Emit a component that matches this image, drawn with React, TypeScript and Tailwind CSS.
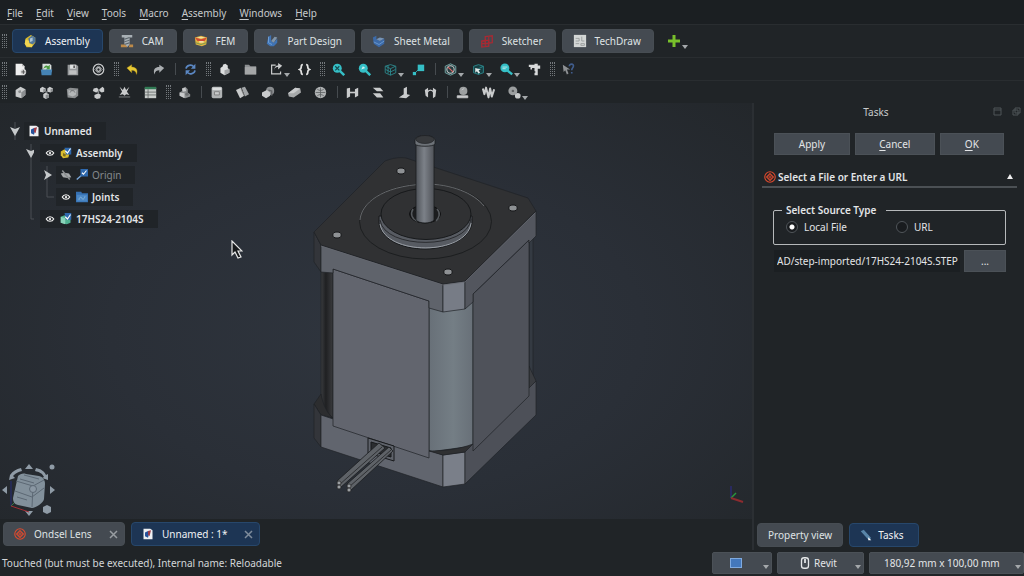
import { useState, type ReactNode } from "react";
import clsx from "clsx";

const G = "#c9cbcc";
const D = "#8b8e90";
const T = "#35bfc6";

// all toolbar glyphs share a 16x16 box
const glyphs: Record<string, ReactNode> = {
  assembly: (
    <>
      <path d="M3 5l6-4 5 3v6l-4 5-6 0-2-4z" fill="#d9b92c" />
      <path d="M6 5l4-3 4 2v5l-3 3-4-2z" fill="#50779d" />
      <path d="M3 6l4 2v3l4 1-1 3-6-1-2-3z" fill="#efd452" />
      <path d="M8 5l3-1v4l-3 1z" fill="#aec5d5" />
    </>
  ),
  cam: (
    <>
      <path d="M2 1h12v3H11v8l-3 3-3-3V4H2z" fill="#a8b0b5" />
      <path d="M5 6l6-2M5 9l6-2M5 12l6-2" stroke="#596269" strokeWidth="1.2" />
      <path d="M1 12h4l3 2v1H1zM11 12h4v3h-5z" fill="#bd8a49" />
    </>
  ),
  fem: (
    <>
      <path d="M1 4l7-2 7 2-1 8-5 2-7-2z" fill="#e0b240" />
      <path d="M1 4l7 2 7-2-3 4H4z" fill="#d14834" />
      <path d="M3 4l5-1 5 1-5 1zM6 8h5v2H6z" fill="#f1e1a5" />
      <path d="M2 10l6 2 6-2" stroke="#6c9952" fill="none" />
    </>
  ),
  part: (
    <>
      <path d="M4 3l3-2v7l3 2 4-5v5l-4 4H6l-4-3z" fill="#3f73b4" />
      <path d="M7 8l4-5 3 1-4 6z" fill="#8195a9" />
      <path d="M4 3v7l4 2" stroke="#74a2d6" fill="none" />
    </>
  ),
  sheet: (
    <>
      <path d="M1 4l4-2v4l4 2 5-3v6l-6 4-6-4z" fill="#3c6aa8" />
      <path d="M5 6l4-2 5 1-5 3z" fill="#7895b8" />
      <path d="M2 9l6 3 6-4" stroke="#6d9bd1" fill="none" />
    </>
  ),
  sketcher: (
    <g fill="none" stroke="#a82a33" strokeWidth="1.5">
      <path d="M2 8l8-1v7l-8 1zM6 3l8-1v8l-8 1z" />
      <path d="M2 11h8M6 7v7M10 3v7" strokeWidth="1.2" />
    </g>
  ),
  techdraw: (
    <>
      <path d="M1 1h14v14H1z" fill="#d3d6d5" />
      <path d="M3 5h4v3H3M10 3v5h3M3 11h4M9 11h4v2H9z" stroke="#979c9c" fill="none" />
    </>
  ),
  new: (
    <>
      <path d="M2 1h8l3 3v11H2z" fill="#eee" />
      <path d="M10 1v3h3" fill="#aaa" />
      <circle cx="11.500" cy="11" r="3.500" fill="#d6d6d6" />
      <path d="M11.500 8.500v5M9 11h5" stroke="#444" />
    </>
  ),
  open: (
    <>
      <path d="M3 1h9l2 2v8H3z" fill="#d8dedc" />
      <path d="M4 8c1-5 4-6 6-4l2-2v6H7l2-2c-2-1-4 0-5 2z" fill="#4a9b3e" />
      <path d="M1 8h14l-1 7H2z" fill="#4583b4" />
    </>
  ),
  save: (
    <>
      <path d="M2 2h11l2 2v11H2z" fill="#96999b" />
      <path d="M5 2h7v5H5z" fill="#dfe1e2" />
      <path d="M9 3h2v3H9z" fill="#555" />
      <path d="M4 9h9v5H4z" fill="#bfc1c2" />
    </>
  ),
  lens: (
    <g fill="none" stroke="#c9cbcc">
      <circle cx="8" cy="8" r="6.500" strokeWidth="1.500" />
      <path d="M8 3.500l4.500 4.500-4.500 4.500L3.500 8z" />
      <circle cx="8" cy="8" r="2.200" strokeWidth="1.500" />
    </g>
  ),
  lensRed: (
    <g fill="none" stroke="#dd4a2e">
      <circle cx="8" cy="8" r="7" strokeWidth="1.500" />
      <path d="M8 3.500l4.500 4.500-4.500 4.500L3.500 8z" strokeWidth="1.500" />
      <circle cx="8" cy="8" r="1.500" strokeWidth="1.200" />
    </g>
  ),
  undo: <path d="M1 6l6-4v3c5 0 8 3 6 9-1-4-3-5-6-5v3z" fill="#e7c935" stroke="#ad8d17" strokeWidth=".5" />,
  redo: <path d="M15 6L9 2v3C4 5 1 8 3 14c1-4 3-5 6-5v3z" fill="#aaaeb1" />,
  sync: (
    <g>
      <path d="M2.500 7C3 3 9 1 12 4.500M13.500 9c-.5 4-6.500 6-9.500 2.500" stroke="#5b88c4" strokeWidth="2" fill="none" />
      <path d="M14 1v6H8.500zM2 15V9h5.500z" fill="#5b88c4" />
    </g>
  ),
  body: (
    <>
      <path d="M3 6l3-2V2l3-1 3 2v3l2 2v4l-6 3-5-3z" fill="#dcdedf" />
      <path d="M8 9l6-2v5l-6 3z" fill="#a3a6a8" />
    </>
  ),
  folder: (
    <>
      <path d="M1 2h5l2 2h7v10H1z" fill="#8c8f91" />
      <path d="M1 5h14v9H1z" fill="#a4a6a7" />
    </>
  ),
  link: (
    <>
      <path d="M7 2.500H2v11h11v-3" stroke={G} strokeWidth="1.500" fill="none" />
      <path d="M5 11c0-5 2-6 5-6v3l5-4.500L10 0v3C7 3 5 5 5 11z" fill={G} />
    </>
  ),
  braces: (
    <path d="M6 2C4 2 4 3 4 5s0 2-2 3c2 1 2 1 2 3s0 3 2 3M10 2c2 0 2 1 2 3s0 2 2 3c-2 1-2 1-2 3s0 3-2 3" stroke="#e2e2e2" strokeWidth="2.200" fill="none" />
  ),
  fitAll: (
    <>
      <path d="M9 9l6 6" stroke={T} strokeWidth="3" />
      <circle cx="6.500" cy="6.500" r="5.500" fill={T} />
      <path d="M4 4l5 5M9 4L4 9" stroke="#164b50" strokeWidth="1.500" />
    </>
  ),
  fitSel: (
    <>
      <path d="M9 9l6 6" stroke={T} strokeWidth="3" />
      <circle cx="6.500" cy="6.500" r="5.500" fill={T} />
      <path d="M4 8l2-4 3 2z" fill="#d2f1f1" />
    </>
  ),
  cube: <path d="M1.500 4L8 2l6.500 2v8L8 15l-6.500-3zM2 4l6 3 6-3M8 7v8M2 8l6 3 6-3M5 3v10" stroke="#2e9297" fill="none" />,
  align: (
    <>
      <path d="M7 2h8v8H7z" fill={T} />
      <path d="M2 14l6-6" stroke={T} />
      <path d="M1 11h4v4H1z" fill={T} />
    </>
  ),
  drawStyle: (
    <>
      <path d="M8 1l6.500 3v8L8 15l-6.500-3V4z" stroke="#82b9b8" fill="#263d40" />
      <circle cx="8" cy="8" r="4.500" stroke="#c4c7c8" strokeWidth="1.300" fill="none" />
      <path d="M5 5l6 6" stroke="#d66" strokeWidth="1.500" />
    </>
  ),
  select: (
    <>
      <path d="M2 4l6-2 6 2v8l-6 2-6-2zM8 7l6-3M8 7v7" stroke="#2e9297" fill="#173e42" />
      <path d="M4 6l7 2-3 1 2 3-2 1-2-3-2 2z" fill="#dfe6e6" />
    </>
  ),
  zoom: (
    <>
      <path d="M9 9l6 5" stroke={T} strokeWidth="3" />
      <circle cx="6" cy="6" r="5.500" fill={T} />
      <path d="M3 5h6M3 7h4" stroke="#d3f0f0" />
    </>
  ),
  caliper: <path d="M1 2h7V1h4v2h3v4h-3v8H8v-3h1v-2H8V6H5v2H3V5H1z" fill="#d8dadb" />,
  whats: (
    <>
      <path d="M1 2l9 6H6l2 5-2 1-2-5-2 2z" fill="#8e9194" />
      <path d="M9 4c0-4 6-3 5 0 0 2-2 2-2 5M12 11v2" stroke="#405d8d" strokeWidth="2" fill="none" />
    </>
  ),
  asm: (
    <>
      <path d="M2 5l6-4 6 3v7l-5 4-7-2z" fill={G} />
      <path d="M9 8l5-4v7l-5 4zM5 6l3-1 1 3-3 1z" fill={D} />
    </>
  ),
  insert: (
    <>
      <path d="M0 3l3-2 4 2v3L4 8 0 7zM9 3l3-2 4 2v3l-3 2-4-1zM4 10l3-2 4 2v4l-4 2-3-2z" fill={G} />
      <path d="M4 4l3-1v3L4 8zM13 4l3-1v3l-3 2zM7 11l4-1v4l-4 2zM6 6l4 1-2 2z" fill={D} />
    </>
  ),
  solve: (
    <>
      <path d="M1 4l4-2 10 1v9l-4 3-9-1z" fill={D} />
      <path d="M3 5l4 1 6-1-1 6-4 2-5-2z" fill="#b4b7b8" />
      <path d="M5 8c1-3 5-3 6 0" stroke="#65686a" fill="none" />
    </>
  ),
  parts: (
    <>
      <path d="M2 3l4-1 2 2v3L5 8 1 6zM9 4l4-3 2 2v4l-3 1-3-2zM3 11l5-2 3 2-1 4-4 1-3-2z" fill={G} />
      <path d="M6 6l3 1-1 3z" fill={D} />
    </>
  ),
  explode: (
    <>
      <path d="M2 1l4 4 2-4 2 4 4-4-3 6 3 4-4-1-2 2-2-2-4 1 3-4z" fill={G} />
      <path d="M1 13h14v1H1z" fill={D} />
    </>
  ),
  bom: (
    <>
      <path d="M1 2h14v13H1z" fill="#c9cdcb" />
      <path d="M1 1h14v3H1z" fill="#317b55" />
      <path d="M1 7.500h14M1 11h14M5 4v11" stroke="#626866" />
    </>
  ),
  ground: (
    <>
      <path d="M2 8l3-2V3l4-2 3 3v4l3 2v3l-6 2-7-3z" fill={D} />
      <path d="M2 8l6 1v6l-6-3zM5 3l4-1 1 4-4 1z" fill={G} />
      <circle cx="11" cy="10" r="2" fill="#6b6e70" />
    </>
  ),
  fixed: (
    <>
      <rect x="2" y="1" width="13" height="14" rx="2" fill="#b0b3b4" />
      <path d="M3 2h11v3H3z" fill="#dcdede" />
      <path d="M5.500 7h6v4h-6z" stroke="#777" fill="#c9cbcb" />
    </>
  ),
  revolute: (
    <>
      <path d="M0 5l6-3 4 10-5 3z" fill={G} />
      <path d="M7 2l4-1 5 9-5 3z" fill="#a2a5a7" />
      <path d="M6 3l4 9" stroke="#777" />
    </>
  ),
  cylindrical: (
    <>
      <circle cx="10" cy="6" r="5" fill={D} />
      <path d="M0 8l6-3 4 3v4l-5 3-5-3z" fill={G} />
      <path d="M8 5l4 1v6" stroke="#5f6264" strokeWidth="1.500" fill="none" />
    </>
  ),
  slider: (
    <>
      <path d="M0 9l9-7 6 1 1 5-9 6-6-1z" fill="#a6a9aa" />
      <path d="M0 9l9-7 6 1-8 6z" fill={G} />
    </>
  ),
  ball: (
    <>
      <circle cx="8" cy="8" r="7" fill="#b0b3b4" />
      <path d="M8 2v12M2 8h12M4 4c3 2 5 2 8 0M4 12c3-2 5-2 8 0" stroke="#5e6163" fill="none" />
    </>
  ),
  distance: (
    <>
      <path d="M1 3l4-1v11l-4 2zM11 4l4-2v10l-4 2z" fill={G} />
      <path d="M4 8h8" stroke={G} strokeWidth="2" />
    </>
  ),
  parallel: <path d="M1 2h9l4 4.500H6zM1 9h9l4 5H6z" fill={G} />,
  perpendicular: <path d="M7 3l4-2v9l4 1-5 4-9-1 6-4z" fill={G} />,
  angle: (
    <>
      <path d="M1 5l4-3v12l-3-2zM11 2l4 3-1 8-3 2z" fill={G} />
      <path d="M4 8c2-4 6-4 8 0" stroke={G} strokeWidth="1.500" fill="none" />
    </>
  ),
  rack: (
    <>
      <circle cx="9" cy="6" r="5" fill="#9da0a1" />
      <path d="M7 5l3-2M1.500 12h13v2.500h-13z" stroke={G} fill={G} />
    </>
  ),
  screw: <path d="M1 3l2 7 2-8 3 12 2-11 2 10 3-9" stroke={G} strokeWidth="2.500" strokeLinejoin="round" fill="none" />,
  gears: (
    <>
      <circle cx="6" cy="6" r="5.500" fill="#9b9e9f" />
      <circle cx="6" cy="6" r="1.500" fill="#5e6163" />
      <circle cx="12" cy="12" r="3.500" fill={G} />
    </>
  ),
  doc: (
    <>
      <path d="M2 1h9l3 2v12H2z" fill="#eef0f2" />
      <path d="M4 6l4-2 2 2-2 7-4-2z" fill="#27539b" />
      <path d="M8 4l4-1-2 8-2-2z" fill="#a03c48" />
    </>
  ),
  asmTree: (
    <>
      <path d="M1 6l5-3 7 5-2 6-7 1-3-4z" fill="#d9bd30" />
      <path d="M4 8l4 2-1 3-3-1z" fill="#816f1f" />
      <path d="M6 1h9v9H8z" fill="#2f69ae" />
      <path d="M7 5l3 3 4-6" stroke="#fff" strokeWidth="1.500" fill="none" />
    </>
  ),
  origin: (
    <>
      <path d="M1 14l8-7" stroke="#7aa7d8" strokeWidth="2" />
      <path d="M6 0h10v10H6z" fill="#2f69ae" />
      <path d="M8 5l2 2 4-5" stroke="#fff" strokeWidth="1.500" fill="none" />
    </>
  ),
  joints: (
    <>
      <path d="M0 1h7l1 2h8v12H0z" fill="#3570b2" />
      <path d="M1 5h14v9H1z" fill="#4a86c4" />
      <path d="M4 12c0-4 3-5 4-2 1 2 3 1 4-3" stroke="#96bfdc" fill="none" />
    </>
  ),
  step: (
    <>
      <path d="M1 5l5-2 8 4v6l-5 2-8-2z" fill="#4fb191" />
      <path d="M1 5l6 2v8l-6-2z" fill="#8ad4ba" />
      <path d="M6 0h9v9H8z" fill="#2f69ae" />
      <path d="M7 5l3 3 4-6" stroke="#fff" strokeWidth="1.500" fill="none" />
    </>
  ),
  eye: (
    <>
      <path d="M3 8c2-4 8-4 10 0-2 4-8 4-10 0z" fill="#25292c" stroke="#f2f2f2" strokeWidth="1.500" />
      <circle cx="8" cy="8" r="1.500" fill="#f2f2f2" />
    </>
  ),
  hidden: (
    <>
      <path d="M1 6l5-1 6 1 3 5-5 1-6-1z" fill="#a6a9ab" />
      <path d="M3 2l10 12M6 7l4 3" stroke="#8b8e90" strokeWidth="2" />
    </>
  ),
  pencil: (
    <>
      <path d="M1 3l4-2 9 10v3l-4-1z" fill="#5985a8" />
      <path d="M11 11l4 4h-4z" fill="#fff" />
    </>
  ),
  mouse: (
    <>
      <rect x="4" y="2" width="8" height="12" rx="3" stroke="#e4e6e8" strokeWidth="1.500" fill="none" />
      <path d="M8 3v5" stroke="#e4e6e8" strokeWidth="2" />
    </>
  ),
};

function Glyph({ name, className = "size-4" }: { name: string; className?: string }) {
  return (
    <svg viewBox="0 0 16 16" className={clsx("shrink-0", className)} aria-hidden="true">
      {glyphs[name]}
    </svg>
  );
}

function Arrow({ className }: { className?: string }) {
  return (
    <svg viewBox="0 0 6 4" className={clsx("pointer-events-none h-1 w-1.5", className)} aria-hidden="true">
      <path d="M0 0h6L3 4z" fill="#a4a8ab" />
    </svg>
  );
}

function Grip() {
  return (
    <span className="flex w-2 shrink-0 justify-center gap-px">
      <span className="h-3.5 border-l border-dotted border-[#73787c]" />
      <span className="h-3.5 border-l border-dotted border-[#73787c]" />
      <span className="h-3.5 border-l border-dotted border-[#73787c]" />
    </span>
  );
}

const menus = ["File", "Edit", "View", "Tools", "Macro", "Assembly", "Windows", "Help"];

const workbenches = [
  { icon: "assembly", label: "Assembly" },
  { icon: "cam", label: "CAM" },
  { icon: "fem", label: "FEM" },
  { icon: "part", label: "Part Design" },
  { icon: "sheet", label: "Sheet Metal" },
  { icon: "sketcher", label: "Sketcher" },
  { icon: "techdraw", label: "TechDraw" },
];

// "#" is a grip, "|" a separator, a trailing "+" means the button has a menu
const mainTools = "# new open save lens # undo redo | sync # body folder link+ braces # fitAll fitSel cube+ align | drawStyle+ select+ zoom+ caliper # whats".split(" ");
const assemblyTools = "# asm insert solve parts explode bom # ground | fixed revolute cylindrical slider ball | distance parallel perpendicular angle | rack screw gears+".split(" ");

function Toolbar({ label, items }: { label: string; items: string[] }) {
  return (
    <div role="toolbar" aria-label={label} className="flex h-[23px] items-center border-t border-[#292d30]">
      {items.map((item, i) => {
        if (item === "#") return <Grip key={i} />;
        if (item === "|")
          return (
            <span key={i} className="flex w-1.5 justify-center">
              <span className="h-3 w-px bg-[#464b4f]" />
            </span>
          );
        const name = item.replace("+", "");
        const menu = item.endsWith("+");
        return (
          <button
            key={i}
            aria-label={name}
            className={clsx("relative flex h-5 items-center pl-[6px] hover:bg-[#343a40]", menu ? "w-7" : "w-[26px]")}
          >
            <Glyph name={name} className="size-[13px]" />
            {menu && <Arrow className="absolute right-0.5 bottom-0.5" />}
          </button>
        );
      })}
    </div>
  );
}

function TreeRow({ icon, label, eye, dim }: { icon: string; label: string; eye?: string; dim?: boolean }) {
  return (
    <div role="treeitem" className={clsx("flex h-[18px] w-fit items-center gap-1 bg-[#202428] pr-3.5 pl-1", dim ? "text-[#85898c]" : "font-semibold")}>
      {eye && <Glyph name={eye} className="size-3" />}
      <Glyph name={icon} className="size-3" />
      {label}
    </div>
  );
}

function Motor() {
  return (
    <svg viewBox="0 103 752 416" className="absolute inset-0 size-full" role="img" aria-label="17HS24-2104S">
      <defs>
        <linearGradient id="shaft">
          <stop offset="0" stopColor="#4f5359" />
          <stop offset=".45" stopColor="#7c8188" />
          <stop offset="1" stopColor="#505359" />
        </linearGradient>
        <linearGradient id="corner">
          <stop offset="0" stopColor="#687078" />
          <stop offset=".55" stopColor="#747e85" />
          <stop offset="1" stopColor="#687078" />
        </linearGradient>
        <linearGradient id="side">
          <stop offset="0" stopColor="#3a3c3f" />
          <stop offset=".4" stopColor="#1f2022" />
          <stop offset="1" stopColor="#3a3b3e" />
        </linearGradient>
      </defs>
      <g stroke="#1f2226" strokeWidth=".7" strokeLinejoin="round">
        <path d="M529 236h4v140h-4z" fill="#343a42" />
        <path d="M321 268h12v150c-6-3-10-9-12-18z" fill="url(#side)" />
        <path d="M429 300h44v146l-44 6z" fill="url(#corner)" />
        <path d="M314 404l7-10c2 11 6 19 12 24l-12-3z" fill="#2c2d2f" />
        <path d="M314 404l7 11v32l-7-9z" fill="#33353a" />
        <path d="M321 415l122 40v32l-122-40z" fill="#61656e" />
        <path d="M443 455l22-3v32l-22 3z" fill="#7a7f89" />
        <path d="M429 451c15 0 31-2 44-7l-8 8-22 3z" fill="#2f3032" />
        <path d="M529 366l7 15-7 9z" fill="#3a3c40" />
        <path d="M465 452l71-71v34l-71 69z" fill="#4d5058" />
        <path d="M333 269l96 32v157l-96-32z" fill="#62656e" />
        <path d="M473 294l56-54v156l-56 55z" fill="#4f525a" />
        <path d="M314 232l7 13v27l-7-10z" fill="#33353a" />
        <path d="M321 245l122 39v28l-14-4v-7l-96-32v4l-12-1z" fill="#5f636b" />
        <path d="M443 284l22-3v28l-22 3z" fill="#777c86" />
        <path d="M465 281l71-70v25l-7 7v-3l-56 54v8l-8 7z" fill="#53565e" />
        <path d="M314 232l71-71c8-3 14-4 21-3l122 40 8 13-71 70-22 3-122-39z" fill="#303133" />
      </g>
      <path d="M321 246l122 39 22-3 70-69" stroke="#656970" strokeWidth=".7" fill="none" />
      <ellipse cx="425.500" cy="221.500" rx="66" ry="37.500" fill="none" stroke="#17191b" strokeWidth=".8" />
      <path d="M360 220c1-16 21-34 65-36 26 0 49 9 59 22" fill="none" stroke="#777a7d" strokeWidth=".8" />
      <path d="M379 216v7c2 16 22 26 46 26s45-11 47-26v-7z" fill="#575b62" stroke="#17191b" />
      <path d="M380 224c5 32 87 32 91-1" fill="none" stroke="#9a9fa6" />
      <path d="M380 220c4 30 88 30 91-1" fill="none" stroke="#1e2022" strokeWidth=".8" />
      <ellipse cx="426" cy="214" rx="45" ry="25.500" fill="#303133" stroke="#17191b" />
      <ellipse cx="425" cy="214" rx="15.500" ry="9" fill="#1c1d1f" stroke="#0f1011" />
      <path d="M413 209c-3 5-1 10 4 12M437 209c4 4 2 9-1 12" stroke="#55595d" strokeWidth="1.500" fill="none" />
      <path d="M416 142v78c3 4 15 4 18 0v-78z" fill="url(#shaft)" stroke="#1b1d20" strokeWidth=".8" />
      <path d="M415 140c0-6 20-6 20 0v4c-2 3-18 3-20 0z" fill="#6d7278" stroke="#1b1d20" strokeWidth=".8" />
      <ellipse cx="425" cy="139.500" rx="9" ry="4" fill="#37393c" stroke="#1b1d20" strokeWidth=".6" />
      {[[401, 171], [513, 208], [337, 235], [448, 272]].map(([x, y]) => (
        <ellipse key={x} cx={x} cy={y} rx="4.200" ry="3" fill="#8e9194" stroke="#161719" />
      ))}
      <path d="M368 438l26 8v15l-26-8z" fill="#5e626a" stroke="#17191b" />
      <path d="M371 442l20 6v9l-20-6z" fill="#2b2d30" stroke="#17191b" />
      <path d="M379 443l-42 38 3 7 45-40zM389 447l-42 37 3 7 43-40z" fill="#5e6267" stroke="#1b1d20" strokeWidth=".8" />
      <path d="M382 447l-43 38M391 450l-42 37" stroke="#2e3033" />
      <g fill="#9b9fa3" stroke="#222" strokeWidth=".7">
        <circle cx="339" cy="483" r="2" />
        <circle cx="339" cy="487" r="2" />
        <circle cx="349" cy="486" r="2" />
        <circle cx="349" cy="490" r="2" />
      </g>
    </svg>
  );
}

function NavCube() {
  return (
    <svg viewBox="0 0 56 56" className="absolute bottom-0 left-0 size-14" role="img" aria-label="Navigation cube">
      <g fill="#8f9ba6">
        <path d="M29 1l4 5h-8zM29 53l4-5h-8zM2 27l5-4v8zM55 27l-5-4v8z" />
        <path d="M10 12c3-4 6-6 11-7l1 3c-4 1-6 2-9 5l2 2-6 2zM36 5c5 1 8 3 10 7l2-1v6l-6-2 2-1c-2-4-5-5-9-6z" />
        <circle cx="52" cy="4" r="2.500" />
        <path d="M43 44l4-2 4 2v5l-4 2-4-2z" />
      </g>
      <path d="M11 43V18" stroke="#272d77" />
      <path d="M11 43l8-8" stroke="#347d45" />
      <path d="M11 43l18 6" stroke="#a12d35" />
      <path d="M18 13c2-2 5-3 8-2l13 2c4 1 6 4 6 8l-1 15c0 3-8 9-12 9l-14-3c-4-1-5-4-5-7z" fill="#82909b" />
      <path d="M16 18l17 5 11-6M33 23l-1 21M15 28l17 6 12-9M20 16l14 4M24 12l15 4M17 34l10 3" stroke="#5c6874" fill="none" />
      <circle cx="33" cy="26" r="3.500" fill="#8a97a3" stroke="#5c6874" />
    </svg>
  );
}

function Cross() {
  return (
    <svg viewBox="0 0 9 9" className="size-[9px]" stroke="currentColor" strokeWidth="1.500" aria-hidden="true">
      <path d="M1 1l7 7M8 1L1 8" />
    </svg>
  );
}

const tabBase = "flex h-6 items-center rounded-sm border whitespace-nowrap";
const tabOn = "border-[#27476b] bg-[#1d3554] text-[#f0f2f4]";
const tabOff = "border-[#474d53] bg-[#444a51] text-[#dfe2e4]";
const flatButton = "border border-[#4b5157] bg-[#444a51]";
const radio =
  "size-3 appearance-none rounded-full border border-[#50555a] bg-[#191c1f] checked:bg-[radial-gradient(circle,#fff_0_2px,#191c1f_3px)]";

export default function App() {
  const [source, setSource] = useState("local");
  const [file, setFile] = useState("AD/step-imported/17HS24-2104S.STEP");

  return (
    <div className="flex min-h-screen flex-col bg-[#202427] font-['Noto_Sans','Open_Sans',sans-serif] text-[10px] leading-4 text-[#e3e5e7]">
      <nav className="flex h-6 items-center gap-[13px] bg-[#1b1f22] px-[7px] pt-0.5 text-[#c7cacc]">
        {menus.map((m) => (
          <button key={m}>
            <span className="underline underline-offset-2">{m[0]}</span>
            {m.slice(1)}
          </button>
        ))}
      </nav>

      <div className="flex h-[33px] items-center border-t border-[#292d30]">
        <Grip />
        <div className="flex items-center gap-1.5 pl-1">
          {workbenches.map((w, i) => (
            <button key={w.label} className={clsx(tabBase, "gap-2 pr-3 pl-2.5", i === 0 ? tabOn : tabOff)}>
              <Glyph name={w.icon} className="size-3.5" />
              {w.label}
            </button>
          ))}
        </div>
        <button aria-label="Add workbench" className="relative ml-3.5 flex h-5 w-5 items-center">
          <svg viewBox="0 0 12 12" className="size-3" aria-hidden="true">
            <path d="M4.500 0h3v4.500H12v3H7.500V12h-3V7.500H0v-3h4.500z" fill="#78c02b" />
          </svg>
          <Arrow className="absolute right-0 bottom-0.5" />
        </button>
      </div>
      <Toolbar label="File and view" items={mainTools} />
      <Toolbar label="Assembly" items={assemblyTools} />

      <main className="flex flex-1">
        <div className="flex flex-1 flex-col">
          <section className="relative flex-1 overflow-hidden bg-[#24282d] bg-[radial-gradient(ellipse_at_50%_55%,#2f353e_0%,#2a2f37_50%,#23272b_100%)]">
            <Motor />
            <div role="tree" aria-label="Model" className="relative flex w-fit flex-col gap-1 pt-[19px] pl-2.5">
              <div className="flex items-center gap-1">
                <svg viewBox="0 0 10 18" className="h-[18px] w-2.5" aria-hidden="true">
                  <path d="M5 0v18" stroke="#4a4f54" />
                  <path d="M0 5l5 2 5-2-5 9z" fill="#c6c9cb" />
                </svg>
                <TreeRow icon="doc" label="Unnamed" />
              </div>
              <div className="flex">
                <svg viewBox="0 0 24 84" className="h-[84px] w-6" aria-hidden="true">
                  <path d="M21 0v75h5" stroke="#4a4f54" fill="none" />
                  <path d="M16 5l5 2 5-2-5 9z" fill="#c6c9cb" />
                </svg>
                <div className="flex flex-col gap-1 pl-1.5">
                  <TreeRow eye="eye" icon="asmTree" label="Assembly" />
                  <div className="flex">
                    <svg viewBox="0 0 16 40" className="h-10 w-4" aria-hidden="true">
                      <path d="M7 0v31h7" stroke="#4a4f54" fill="none" />
                      <path d="M4 4l8 5-8 5 2-5z" fill="#c6c9cb" />
                    </svg>
                    <div className="flex flex-col gap-1">
                      <TreeRow eye="hidden" icon="origin" label="Origin" dim />
                      <TreeRow eye="eye" icon="joints" label="Joints" />
                    </div>
                  </div>
                  <TreeRow eye="eye" icon="step" label="17HS24-2104S" />
                </div>
              </div>
            </div>
            <svg viewBox="0 0 12 19" className="absolute top-[137px] left-[231px] h-[19px] w-3" aria-hidden="true">
              <path d="M1 1v14l3-3 3 6 3-1-3-6h4z" fill="#17191b" stroke="#e8e8e8" strokeWidth="1.200" />
            </svg>
            <NavCube />
            <svg viewBox="0 0 20 24" className="absolute right-1 bottom-3.5 h-6 w-5" aria-hidden="true">
              <path d="M3 17V5" stroke="#292a60" strokeWidth="2" />
              <path d="M3 17l5-5" stroke="#29973e" strokeWidth="1.500" />
              <path d="M3 17l12 4" stroke="#8c2b2f" strokeWidth="2" />
            </svg>
          </section>
          <div role="tablist" aria-label="Documents" className="flex gap-1.5 px-[3px] pt-[3px] pb-1">
            <button role="tab" aria-selected="false" className={clsx(tabBase, "w-[122px] gap-2 pr-1.5 pl-2.5", tabOff)}>
              <Glyph name="lensRed" className="size-3" />
              Ondsel Lens
              <span className="ml-auto text-[#989da1]">
                <Cross />
              </span>
            </button>
            <button role="tab" aria-selected="true" className={clsx(tabBase, "w-[129px] gap-2 pr-1.5 pl-2.5", tabOn)}>
              <Glyph name="doc" className="size-3" />
              Unnamed : 1*
              <span className="ml-auto text-[#7f8c9b]">
                <Cross />
              </span>
            </button>
          </div>
        </div>

        <aside className="flex w-[272px] flex-col border-l-2 border-[#2b2f33]">
          <header className="relative flex h-[18px] items-center justify-center pr-[26px] text-[#c7cacc]">
            Tasks
            <div className="absolute top-1 right-[3px] flex gap-2.5">
              <button aria-label="Toggle overlay">
                <svg viewBox="0 0 9 9" className="size-[9px]" fill="none" stroke="#4f5458" aria-hidden="true">
                  <path d="M1 1h7v7H1zM1 3h7" />
                </svg>
              </button>
              <button aria-label="Float">
                <svg viewBox="0 0 9 9" className="size-[9px]" fill="none" stroke="#4f5458" aria-hidden="true">
                  <path d="M3 1h5v5H3zM1 3h5v5H1z" />
                </svg>
              </button>
            </div>
          </header>
          <div className="flex gap-[5px] px-5 pt-3">
            <button className={clsx("h-[22px] flex-[76]", flatButton)}>Apply</button>
            <button className={clsx("h-[22px] flex-[80]", flatButton)}>
              <u className="underline-offset-2">C</u>ancel
            </button>
            <button className={clsx("h-[22px] flex-[64]", flatButton)}>
              <u className="underline-offset-2">O</u>K
            </button>
          </div>
          <button className="mt-3 mr-[7px] ml-2 flex h-[21px] items-center gap-0.5 border-b-2 border-[#4b5054] pr-1 pl-0.5 font-semibold">
            <Glyph name="lensRed" className="size-3" />
            Select a File or Enter a URL
            <svg viewBox="0 0 6 5" className="ml-auto h-[5px] w-1.5" aria-hidden="true">
              <path d="M3 0l3 5H0z" fill="#eee" />
            </svg>
          </button>
          <fieldset className="mt-3.5 mr-[18px] ml-[19px] flex h-[43px] rounded-xs border border-[#b6b9bb] px-3">
            <legend className="-ml-1 pr-2.5 pl-1 font-semibold">Select Source Type</legend>
            <label className="flex h-[18px] w-[110px] items-center gap-1.5">
              <input type="radio" name="source" checked={source === "local"} onChange={() => setSource("local")} className={radio} />
              Local File
            </label>
            <label className="flex h-[18px] items-center gap-1.5">
              <input type="radio" name="source" checked={source === "url"} onChange={() => setSource("url")} className={radio} />
              URL
            </label>
          </fieldset>
          <div className="mt-[5px] mr-[18px] ml-5 flex gap-1">
            <input aria-label="File path" value={file} onChange={(e) => setFile(e.target.value)} className="h-[22px] min-w-0 flex-1 bg-[#1b1f22] pl-[3px] outline-none" />
            <button aria-label="Browse" className={clsx("h-[22px] w-[42px]", flatButton)}>
              ...
            </button>
          </div>
          <div role="tablist" aria-label="Panels" className="mt-auto flex gap-1.5 px-[3px] pb-[3px]">
            <button role="tab" aria-selected="false" className={clsx(tabBase, "px-2.5", tabOff)}>
              Property view
            </button>
            <button role="tab" aria-selected="true" className={clsx(tabBase, "gap-1.5 pr-3.5 pl-2.5", tabOn)}>
              <Glyph name="pencil" className="size-3" />
              Tasks
            </button>
          </div>
        </aside>
      </main>

      <footer className="flex h-[26px] items-center gap-[5px]">
        <span className="mr-auto pl-0.5 text-[#d3d6d8]">Touched (but must be executed), Internal name: Reloadable</span>
        <button aria-label="Notifications" className={clsx("relative flex h-[22px] w-[60px] items-center rounded-xs pl-[17px]", flatButton)}>
          <span className="h-2.5 w-3 border border-[#7faadf] bg-[#4478bb]" />
          <Arrow className="absolute right-0.5 bottom-1" />
        </button>
        <label className={clsx("relative flex h-[22px] w-[87px] items-center gap-0.5 rounded-xs pl-5", flatButton)}>
          <Glyph name="mouse" className="size-3.5" />
          <select aria-label="Navigation style" className="flex-1 appearance-none bg-transparent outline-none">
            <option>Revit</option>
          </select>
          <Arrow className="absolute right-0.5 bottom-1" />
        </label>
        <label className={clsx("relative flex h-[22px] w-[155px] items-center rounded-xs", flatButton)}>
          <select aria-label="View size" className="w-full appearance-none bg-transparent pl-3.5 outline-none">
            <option>180,92 mm x 100,00 mm</option>
          </select>
          <Arrow className="absolute right-0.5 bottom-1" />
        </label>
      </footer>
    </div>
  );
}
